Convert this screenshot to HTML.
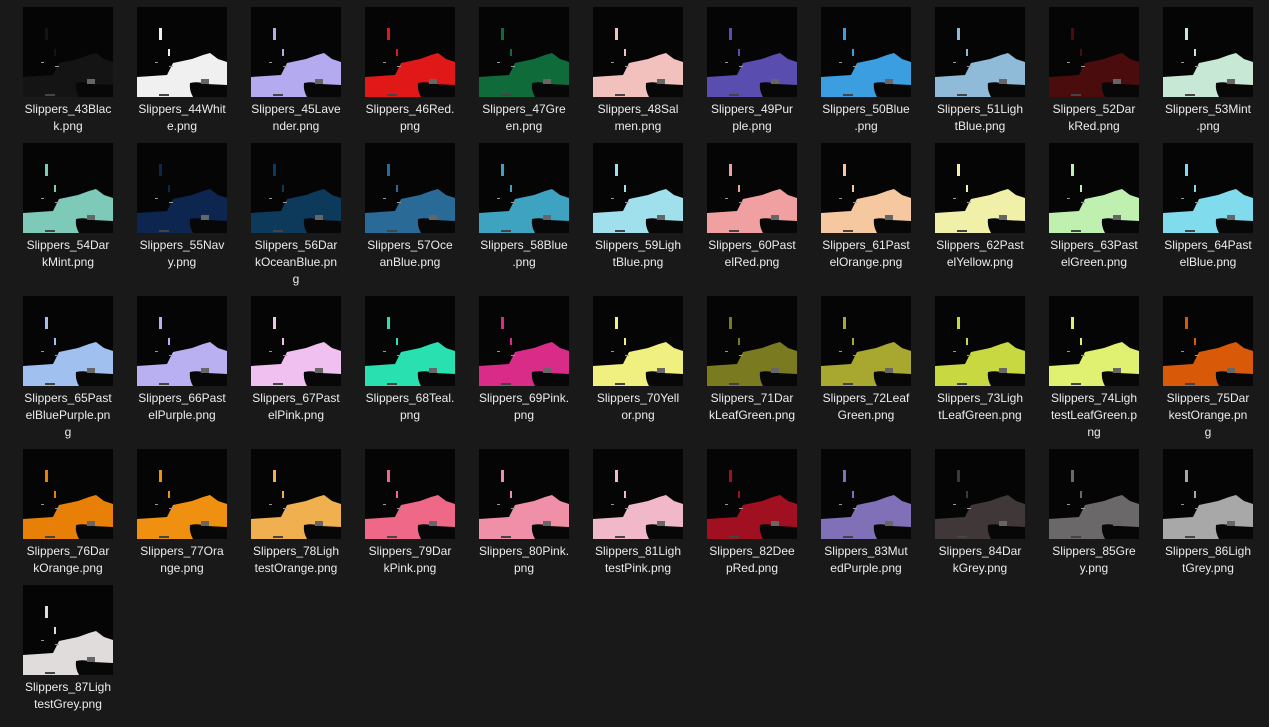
<!DOCTYPE html>
<html><head><meta charset="utf-8"><style>
html,body{margin:0;padding:0;background:#191919;width:1269px;height:727px;overflow:hidden}
.row{position:absolute;left:11px;display:flex}
.c{width:114px;text-align:center;font:12px/17px "Liberation Sans",sans-serif;color:#ececec}
.c svg{display:block;width:90px;height:90px;margin:0 auto 4px}
</style></head><body>
<svg width="0" height="0" style="position:absolute"><defs><symbol id="t" viewBox="0 0 90 90">
<rect width="90" height="90" fill="#050505"/>
<path d="M0,70 L30,68 L36,56 L55,52 L66,48 L73,46 L81,52 L90,55 L90,90 L0,90 Z" fill="currentColor"/>
<path d="M53,76 Q60,74 70,77 L90,78 L90,90 L56,90 Q52,83 53,76Z" fill="#070707"/>
<rect x="64" y="72" width="8" height="5" fill="#666"/>
<rect x="22" y="21" width="3" height="12" fill="currentColor"/>
<rect x="31" y="42" width="2" height="7" fill="currentColor"/>
<rect x="18" y="55" width="3" height="1" fill="#999"/>
<rect x="32" y="59" width="4" height="1" fill="#999"/>
<rect x="22" y="87" width="10" height="2" fill="#444"/>
</symbol></defs></svg>

<div class="row" style="top:7px">
<div class="c"><svg style="color:#141414"><use href="#t"/></svg>Slippers_43Blac<br>k.png</div>
<div class="c"><svg style="color:#f0f0f0"><use href="#t"/></svg>Slippers_44Whit<br>e.png</div>
<div class="c"><svg style="color:#b3aaf0"><use href="#t"/></svg>Slippers_45Lave<br>nder.png</div>
<div class="c"><svg style="color:#e01818"><use href="#t"/></svg>Slippers_46Red.<br>png</div>
<div class="c"><svg style="color:#0f6b3a"><use href="#t"/></svg>Slippers_47Gre<br>en.png</div>
<div class="c"><svg style="color:#f2c0bd"><use href="#t"/></svg>Slippers_48Sal<br>men.png</div>
<div class="c"><svg style="color:#5a4db0"><use href="#t"/></svg>Slippers_49Pur<br>ple.png</div>
<div class="c"><svg style="color:#3a9ee0"><use href="#t"/></svg>Slippers_50Blue<br>.png</div>
<div class="c"><svg style="color:#8fbbd8"><use href="#t"/></svg>Slippers_51Ligh<br>tBlue.png</div>
<div class="c"><svg style="color:#4a0c0c"><use href="#t"/></svg>Slippers_52Dar<br>kRed.png</div>
<div class="c"><svg style="color:#c8e8d6"><use href="#t"/></svg>Slippers_53Mint<br>.png</div>
</div>

<div class="row" style="top:143px">
<div class="c"><svg style="color:#7ecab8"><use href="#t"/></svg>Slippers_54Dar<br>kMint.png</div>
<div class="c"><svg style="color:#0c2650"><use href="#t"/></svg>Slippers_55Nav<br>y.png</div>
<div class="c"><svg style="color:#0d3a5a"><use href="#t"/></svg>Slippers_56Dar<br>kOceanBlue.pn<br>g</div>
<div class="c"><svg style="color:#2a6a96"><use href="#t"/></svg>Slippers_57Oce<br>anBlue.png</div>
<div class="c"><svg style="color:#3ea3c0"><use href="#t"/></svg>Slippers_58Blue<br>.png</div>
<div class="c"><svg style="color:#a0e0ec"><use href="#t"/></svg>Slippers_59Ligh<br>tBlue.png</div>
<div class="c"><svg style="color:#f0a0a0"><use href="#t"/></svg>Slippers_60Past<br>elRed.png</div>
<div class="c"><svg style="color:#f5c8a0"><use href="#t"/></svg>Slippers_61Past<br>elOrange.png</div>
<div class="c"><svg style="color:#f0f0a8"><use href="#t"/></svg>Slippers_62Past<br>elYellow.png</div>
<div class="c"><svg style="color:#c0f0b0"><use href="#t"/></svg>Slippers_63Past<br>elGreen.png</div>
<div class="c"><svg style="color:#80dcec"><use href="#t"/></svg>Slippers_64Past<br>elBlue.png</div>
</div>

<div class="row" style="top:296px">
<div class="c"><svg style="color:#a0c0f0"><use href="#t"/></svg>Slippers_65Past<br>elBluePurple.pn<br>g</div>
<div class="c"><svg style="color:#b8b0f0"><use href="#t"/></svg>Slippers_66Past<br>elPurple.png</div>
<div class="c"><svg style="color:#f0c0f0"><use href="#t"/></svg>Slippers_67Past<br>elPink.png</div>
<div class="c"><svg style="color:#28e0b0"><use href="#t"/></svg>Slippers_68Teal.<br>png</div>
<div class="c"><svg style="color:#d82c88"><use href="#t"/></svg>Slippers_69Pink.<br>png</div>
<div class="c"><svg style="color:#f0f080"><use href="#t"/></svg>Slippers_70Yell<br>or.png</div>
<div class="c"><svg style="color:#7a7a20"><use href="#t"/></svg>Slippers_71Dar<br>kLeafGreen.png</div>
<div class="c"><svg style="color:#a8a830"><use href="#t"/></svg>Slippers_72Leaf<br>Green.png</div>
<div class="c"><svg style="color:#c8d840"><use href="#t"/></svg>Slippers_73Ligh<br>tLeafGreen.png</div>
<div class="c"><svg style="color:#e0f070"><use href="#t"/></svg>Slippers_74Ligh<br>testLeafGreen.p<br>ng</div>
<div class="c"><svg style="color:#d85a08"><use href="#t"/></svg>Slippers_75Dar<br>kestOrange.pn<br>g</div>
</div>

<div class="row" style="top:449px">
<div class="c"><svg style="color:#e88008"><use href="#t"/></svg>Slippers_76Dar<br>kOrange.png</div>
<div class="c"><svg style="color:#f09010"><use href="#t"/></svg>Slippers_77Ora<br>nge.png</div>
<div class="c"><svg style="color:#f0b050"><use href="#t"/></svg>Slippers_78Ligh<br>testOrange.png</div>
<div class="c"><svg style="color:#f06888"><use href="#t"/></svg>Slippers_79Dar<br>kPink.png</div>
<div class="c"><svg style="color:#f090a8"><use href="#t"/></svg>Slippers_80Pink.<br>png</div>
<div class="c"><svg style="color:#f0b8c8"><use href="#t"/></svg>Slippers_81Ligh<br>testPink.png</div>
<div class="c"><svg style="color:#a01020"><use href="#t"/></svg>Slippers_82Dee<br>pRed.png</div>
<div class="c"><svg style="color:#8070b8"><use href="#t"/></svg>Slippers_83Mut<br>edPurple.png</div>
<div class="c"><svg style="color:#403838"><use href="#t"/></svg>Slippers_84Dar<br>kGrey.png</div>
<div class="c"><svg style="color:#6a6868"><use href="#t"/></svg>Slippers_85Gre<br>y.png</div>
<div class="c"><svg style="color:#a8a8a8"><use href="#t"/></svg>Slippers_86Ligh<br>tGrey.png</div>
</div>

<div class="row" style="top:585px">
<div class="c"><svg style="color:#e0dcdc"><use href="#t"/></svg>Slippers_87Ligh<br>testGrey.png</div>
</div>
</body></html>
